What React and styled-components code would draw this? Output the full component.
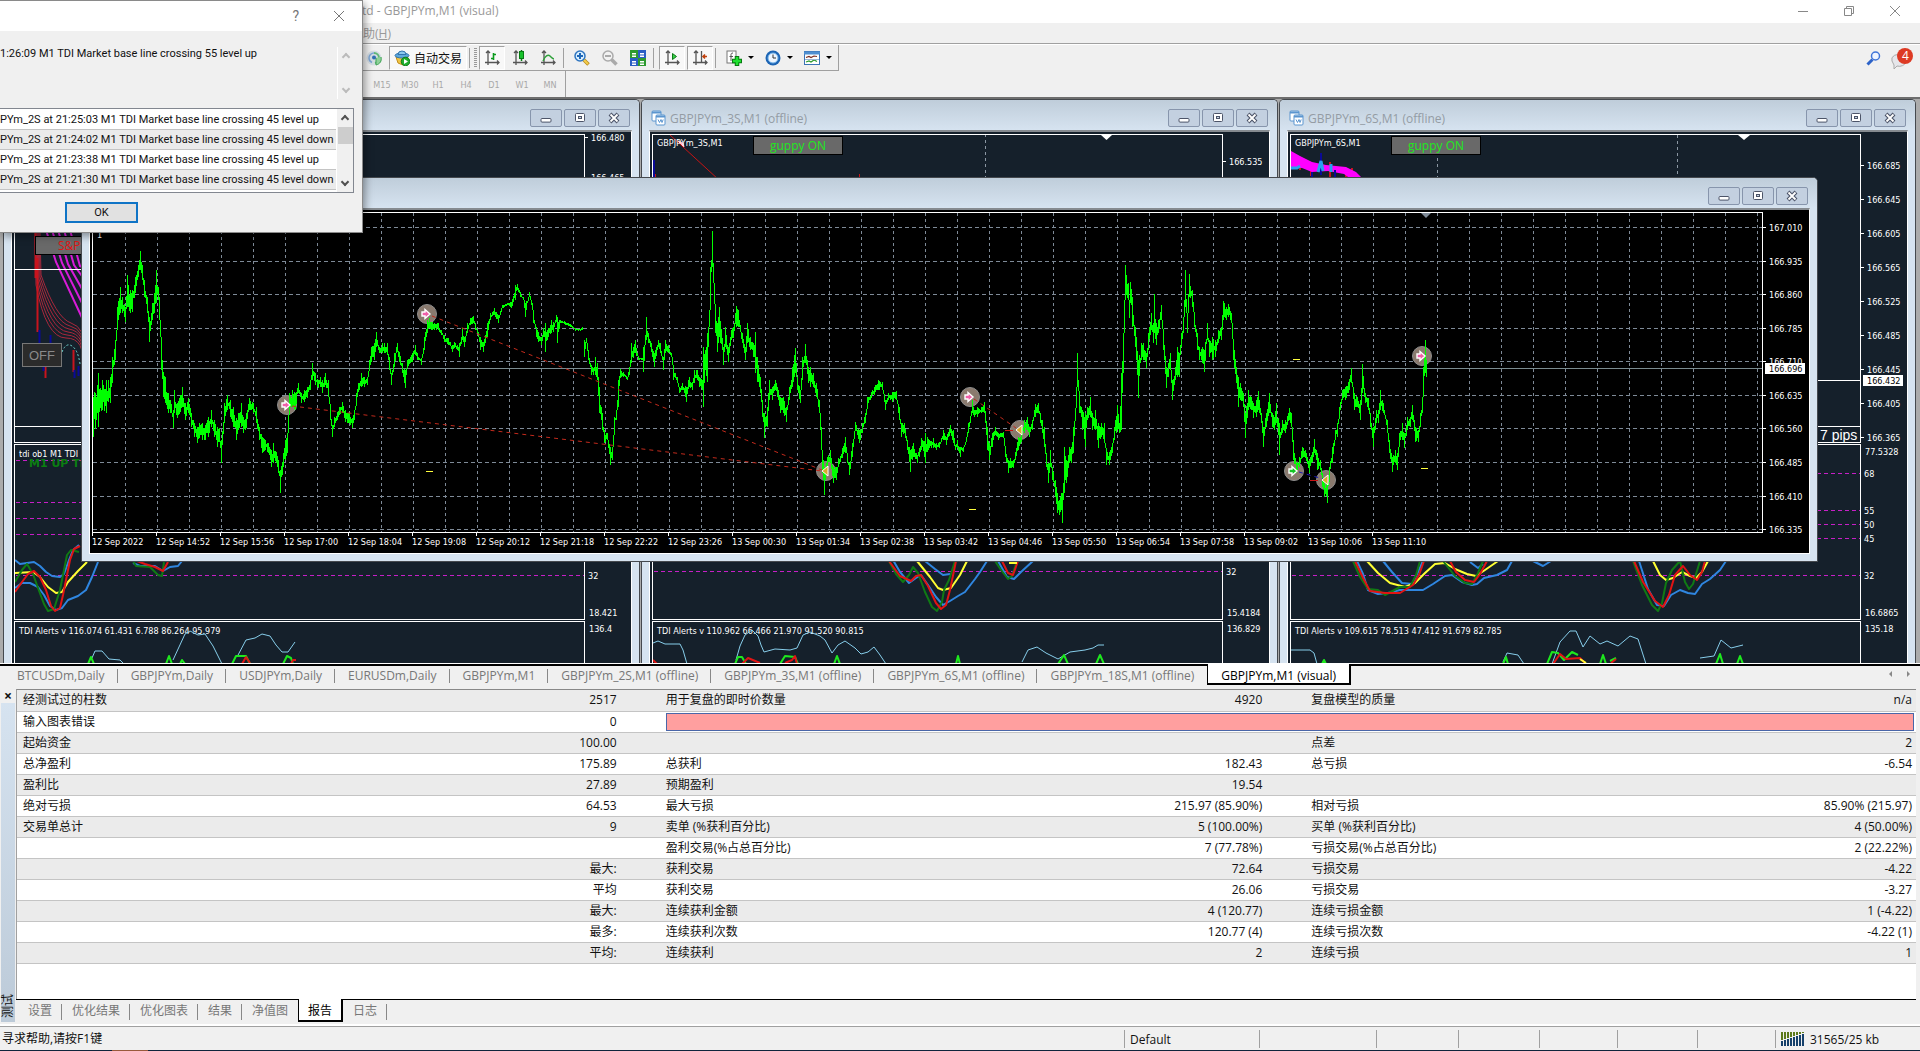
import React, { useState } from "react";
import styled, { createGlobalStyle } from "styled-components";

const UI_FONT = `"Open Sans", "Noto Sans CJK SC", sans-serif`;
const CHART_FONT = `"DejaVu Sans Condensed", "Open Sans", sans-serif`;

const NAVY = "#15202b";

/* ---------- data ---------- */

const chartTabs = [
  "BTCUSDm,Daily",
  "GBPJPYm,Daily",
  "USDJPYm,Daily",
  "EURUSDm,Daily",
  "GBPJPYm,M1",
  "GBPJPYm_2S,M1 (offline)",
  "GBPJPYm_3S,M1 (offline)",
  "GBPJPYm_6S,M1 (offline)",
  "GBPJPYm_18S,M1 (offline)",
  "GBPJPYm,M1 (visual)",
];

const testerTabs = ["设置", "优化结果", "优化图表", "结果", "净值图", "报告", "日志"];

const timeframes = ["M15", "M30", "H1", "H4", "D1", "W1", "MN"];

const alerts = [
  "PYm_2S at 21:25:03 M1 TDI Market base line crossing 45 level up",
  "PYm_2S at 21:24:02 M1 TDI Market base line crossing 45 level down",
  "PYm_2S at 21:23:38 M1 TDI Market base line crossing 45 level up",
  "PYm_2S at 21:21:30 M1 TDI Market base line crossing 45 level down",
];

const report = [
  ["经测试过的柱数", "2517", "用于复盘的即时价数量", "4920", "复盘模型的质量", "n/a"],
  ["输入图表错误", "0"],
  ["起始资金", "100.00", "", "", "点差", "2"],
  ["总净盈利", "175.89", "总获利", "182.43", "总亏损", "-6.54"],
  ["盈利比", "27.89", "预期盈利", "19.54", "", ""],
  ["绝对亏损", "64.53", "最大亏损", "215.97 (85.90%)", "相对亏损", "85.90% (215.97)"],
  ["交易单总计", "9", "卖单 (%获利百分比)", "5 (100.00%)", "买单 (%获利百分比)", "4 (50.00%)"],
  ["", "", "盈利交易(%占总百分比)", "7 (77.78%)", "亏损交易(%占总百分比)", "2 (22.22%)"],
  ["", "最大:", "获利交易", "72.64", "亏损交易", "-4.22"],
  ["", "平均", "获利交易", "26.06", "亏损交易", "-3.27"],
  ["", "最大:", "连续获利金额", "4 (120.77)", "连续亏损金额", "1 (-4.22)"],
  ["", "最多:", "连续获利次数", "120.77 (4)", "连续亏损次数", "-4.22 (1)"],
  ["", "平均:", "连续获利", "2", "连续亏损", "1"],
];

const timeLabels = [
  "12 Sep 2022", "12 Sep 14:52", "12 Sep 15:56", "12 Sep 17:00", "12 Sep 18:04",
  "12 Sep 19:08", "12 Sep 20:12", "12 Sep 21:18", "12 Sep 22:22", "12 Sep 23:26",
  "13 Sep 00:30", "13 Sep 01:34", "13 Sep 02:38", "13 Sep 03:42", "13 Sep 04:46",
  "13 Sep 05:50", "13 Sep 06:54", "13 Sep 07:58", "13 Sep 09:02", "13 Sep 10:06",
  "13 Sep 11:10",
];

// x, high, low triples, three units to a pixel
const history = [
  {
    x: 0,
    y: 180,
    bars: `280 650 770 293 580 740 305 600 690 318 600 700 330 590 670 337 530 610 345 480 540 350 380 440
    360 320 400 367 350 400 374 380 425 382 285 380 390 330 400 397 330 395 405 290 340 413 255 290
    420 212 270 427 255 300 433 300 350 440 350 400 447 410 485 455 370 420 462 340 400 467 270 370
    474 320 360 478 350 420 484 500 570 488 575 650 495 590 670 503 640 700 510 660 700 518 690 745
    523 630 700 530 670 715 540 645 695 547 620 680 555 670 720 565 655 700 573 700 740 582 730 770
    590 740 790 598 730 775 607 730 780 615 735 780 625 710 770 633 690 740 642 720 770 650 740 800
    657 745 785 664 780 850 672 670 730 680 645 690 690 660 710 698 680 740 707 715 780 715 700 750
    722 670 740 730 710 760 738 700 745 748 655 690 758 670 700 768 680 730 776 740 780 785 770 820
    795 780 810 805 790 820 812 810 860 820 790 850 828 815 850 835 840 880 841 870 940 848 820 860
    855 780 840 862 760 820 868 640 690 877 630 680 885 640 690 893 610 640 903 640 670 912 630 665
    922 620 655 930 600 630 937 548 600 945 580 615 953 600 625 960 590 620 967 600 640 975 580 615
    983 600 650 990 680 720 995 735 770 1003 710 740 1010 695 720 1017 680 705 1026 665 700 1034 690 725
    1042 700 730 1048 700 730 1055 715 745 1062 690 720 1068 640 670 1075 610 635 1083 580 620 1092 590 620
    1102 590 615 1108 540 570 1114 500 545 1122 490 540 1129 455 500 1137 500 520 1145 490 520 1152 490 520
    1160 490 525 1167 530 570 1174 580 615 1181 520 560 1190 490 515 1198 515 545 1207 550 580 1214 570 625
    1222 540 565 1230 530 550 1237 520 545 1244 495 525 1252 520 540 1264 535 555 1272 470 510 1280 420 460
    1286 415 445 1293 425 450 1303 430 450 1313 430 450 1323 450 465 1333 465 485 1343 475 495 1355 495 515
    1363 485 505 1376 490 530 1385 445 480 1393 470 500 1400 430 460 1410 415 435 1418 408 430 1425 430 450
    1433 455 470 1439 480 510`,
  },
  {
    x: 480,
    y: 200,
    bars: `0 410 440 10 425 455 20 370 410 30 340 360 42 325 345 55 345 370 65 315 325 80 310 316 92 305 325
    105 255 300 112 252 270 120 275 290 130 290 300 136 310 350 147 275 290 155 310 330 160 330 370
    168 380 410 175 395 425 182 410 435 190 385 410 196 370 455 204 385 410 214 360 400 220 365 395
    229 345 365 232 350 430 240 360 368 255 365 375 270 372 380 285 383 392 300 388 393 307 380 390`,
  },
  {
    x: 480,
    y: 200,
    bars: `311 420 470 318 415 430 325 450 480 333 495 525 340 505 525 346 470 525 352 490 540 358 560 640
    365 640 690 373 690 730 382 700 720 390 740 795 397 740 780 402 650 690 408 630 660 415 540 620
    420 508 535 430 515 530 440 530 540 446 500 525 452 430 490 460 440 475 466 420 460 473 470 480
    485 475 480 490 440 515 497 350 420 505 400 430 512 430 455 522 460 500 533 420 440 540 430 460
    549 470 510 556 420 460 565 435 460 572 460 470 580 500 540 590 530 550 598 560 580 607 550 570
    619 560 605 626 530 560 635 545 570 643 510 550 650 510 540 658 530 560 665 540 570 670 440 620
    676 450 510 682 400 545 687 330 370 689 200 300 695 92 200 700 190 250 706 320 400 712 370 455
    718 320 410 728 440 495 736 380 440 743 440 485 752 390 420 760 380 415 768 318 380 775 330 380
    785 400 430 794 440 480 801 370 430 810 410 450 818 430 470 825 395 520 832 470 545 840 530 580
    847 600 650 852 640 715 860 620 680 868 540 600 876 560 600 884 540 570 892 560 590 901 590 640
    910 590 640 919 620 665 928 560 600 936 500 560 944 445 520 952 530 570 960 570 610 967 470 540
    974 432 490 983 500 550 990 500 560 1000 520 560 1008 550 590 1016 600 640 1022 680 750 1027 760 820
    1033 800 885 1040 770 800 1050 750 790 1058 800 850 1067 800 840 1075 775 800 1085 745 775
    1094 710 760 1102 760 790 1108 790 825 1115 730 770 1125 665 690 1138 690 730 1147 670 700
    1155 640 670 1162 590 620 1172 575 595 1182 560 585 1194 540 570 1205 545 570 1214 600 630
    1225 580 600 1237 575 605 1248 572 600 1256 620 660 1264 670 710 1272 670 700 1280 720 750
    1291 750 815 1300 730 770 1310 765 790 1322 715 750 1336 700 790 1347 720 745 1358 715 745
    1368 730 750 1378 725 745 1388 690 720 1398 710 735 1410 675 700 1418 690 730 1425 735 750
    1432 720 745 1439 750 770`,
  },
  {
    x: 960,
    y: 200,
    bars: `0 740 755 10 740 755 18 710 725 25 670 700 35 600 640 43 630 650 52 620 650 62 620 640 72 607 640
    80 680 750 86 730 780 95 700 740 105 680 705 115 700 720 128 695 715 136 740 770 143 780 820
    150 775 805 158 780 805 165 755 780 173 710 750 183 690 725 192 660 700 200 650 690 208 680 710
    217 660 690 224 612 650 233 608 640 240 640 670 247 660 700 253 680 740 258 760 800 263 790 850
    269 750 800 276 800 840 284 840 890 290 880 940 298 900 945 303 880 930 307 880 970 311 740 880
    318 780 850 326 740 790 333 740 790 340 680 760 347 560 620 352 458 560 358 590 640 365 630 690
    375 640 740 382 620 660 389 590 650 396 640 690 406 630 690 415 670 745 424 670 710 433 670 730
    438 750 795 447 755 795 455 730 760 462 680 720 470 615 690 477 670 700 483 520 690 489 400 520
    492 300 400 496 195 300 503 250 300 507 300 355 511 245 310 517 290 380 524 380 440 529 410 480
    535 480 595 543 430 480 550 430 480 557 460 505 565 400 450 572 340 390 578 370 430 582 282 400
    587 370 435 595 360 400 603 315 360 610 400 450 617 500 565 625 490 530 631 460 510 637 540 600
    645 500 540 651 440 530 657 460 530 664 400 440 670 350 400 676 210 320 681 340 400 688 222 290
    695 270 320 703 340 380 710 400 450 718 440 480 725 440 490 733 450 515 740 370 420 747 420 470
    757 410 480 765 420 470 775 390 430 783 380 420 790 302 360 797 320 360 805 312 350 813 340 370
    820 420 480 828 500 550 833 530 620 840 550 600 848 580 620 856 640 715 864 570 630 872 590 630
    880 610 655 888 600 650 895 572 630 902 640 670 909 680 740 917 640 680 926 580 640 935 640 680
    942 650 690 949 610 670 957 670 765 965 660 700 975 660 700 986 625 660 993 640 680 1000 720 780
    1008 790 820 1016 770 800 1025 740 775 1035 750 775 1047 780 820 1055 755 785 1062 718 760
    1072 760 810 1080 780 810 1086 820 860 1093 850 890 1101 850 910 1108 800 840 1117 740 790
    1125 690 720 1132 670 710 1138 620 650 1145 570 600 1155 560 600 1165 545 580 1174 505 550
    1181 580 630 1190 590 620 1200 600 660 1207 492 580 1215 580 610 1223 595 630 1230 640 680
    1239 680 740 1247 630 670 1254 630 670 1261 570 630 1270 610 640 1280 660 700 1288 720 760
    1296 770 815 1304 750 790 1311 760 810 1318 700 740 1326 670 720 1333 700 745 1341 650 690
    1350 650 680 1357 615 660 1365 680 725 1373 690 725 1380 640 680 1385 590 640 1390 500 590
    1394 420 520 1399 480 530`,
  },
];

// One vertical bar per pixel column, joined to its neighbour
const buildPricePath = () => {
  let seed = 7;
  const rand = () => {
    seed = (seed * 16807) % 2147483647;
    return seed / 2147483647;
  };
  let d = "";
  history.forEach((part) => {
    const n = part.bars.trim().split(/\s+/).map(Number);
    const samples = [];
    for (let i = 0; i < n.length; i += 3) {
      samples.push([
        Math.round(part.x + n[i] / 3),
        part.y + n[i + 1] / 3,
        part.y + n[i + 2] / 3,
      ]);
    }
    let prev = null;
    const bar = (x, hi, lo) => {
      if (prev) {
        if (lo < prev[0]) lo = prev[0];
        if (hi > prev[1]) hi = prev[1];
      }
      d += `M${x}.5 ${hi.toFixed(1)}V${Math.max(lo, hi + 1).toFixed(1)}`;
      prev = [hi, lo];
    };
    samples.forEach(([x, hi, lo], i) => {
      bar(x, hi, lo);
      const next = samples[i + 1];
      if (!next) return;
      for (let k = x + 1; k < next[0]; k++) {
        const t = (k - x) / (next[0] - x);
        const h = hi + (next[1] - hi) * t;
        const l = lo + (next[2] - lo) * t;
        const span = l - h;
        bar(k, h + span * rand() * 0.4, l - span * rand() * 0.4);
      }
    });
  });
  return d;
};

const pricePath = buildPricePath();

const gridX = Array.from({ length: 52 }, (_, i) => 125 + i * 32);

const prices = [
  ["167.010", 227], ["166.935", 261], ["166.860", 294], ["166.785", 328], ["166.710", 361],
  ["166.635", 395], ["166.560", 428], ["166.485", 462], ["166.410", 496], ["166.335", 529],
];

const markers = [
  { x: 287, y: 405, kind: "sell" },
  { x: 427, y: 314, kind: "sell" },
  { x: 826, y: 471, kind: "close" },
  { x: 970, y: 397, kind: "sell" },
  { x: 1020, y: 430, kind: "close" },
  { x: 1294, y: 471, kind: "buy" },
  { x: 1326, y: 480, kind: "close" },
  { x: 1422, y: 356, kind: "sell" },
];

const BLUE = "#2f86e0";
const YELLOW = "#ffff33";
const GREEN = "#0f7a14";
const RED = "#e01414";
const SKY = "#87ceeb";
const LIME = "#1ee81e";

const offlineWindows = [
  {
    x: 14,
    title: "",
    axis: [["166.480", 137], ["166.465", 177]],
    panes: [
      { label: "" },
      { label: "tdi ob1 M1 TDI", levels: [460, 502, 518, 534, 575], axis: [["32", 575], ["18.421", 612]] },
      { label: "TDI Alerts v 116.074 61.431 6.788 86.264 95.979", axis: [["136.4", 628]] },
    ],
    lines: [
      [BLUE, "15,560 20,564 27,563 34,562 40,566 46,572 52,576 60,577 64,574 69,560 73,550 79,545"],
      [BLUE, "15,588 22,583 30,583 38,587 44,595 50,606 56,610 62,608 68,600 78,596 86,590 92,577 98,562"],
      [YELLOW, "15,573 33,572 40,577 48,587 56,593 62,592 68,582 78,571 87,562"],
      [GREEN, "15,582 22,570 27,564 33,574 38,588 44,604 48,611 54,609 60,590 64,570 67,555 71,550 79,552"],
      [RED, "15,592 22,582 28,574 34,571 40,577 46,590 51,606 55,611 60,608 63,595 66,580 70,560 74,549 80,546"],
      [BLUE, "133,563 140,566 155,566 163,571 170,567 178,566 182,561"],
      [GREEN, "133,561 136,566 150,567 158,575 162,576 164,562"],
      [RED, "137,561 145,564 155,567 163,571 168,562"],
    ],
    alerts: [
      [SKY, "92,658 95,651 102,651 109,659 120,660 124,664"],
      [SKY, "173,660 185,634 190,631 198,635 205,634 213,646 222,664"],
      [SKY, "237,657 246,640 255,638 262,634 270,636 276,645 282,652 288,652 295,642"],
      [LIME, "88,664 91,657 94,664"],
      [LIME, "166,664 169,656 172,664"],
      [LIME, "180,664 182,660 185,664"],
      [LIME, "232,664 236,656 246,656 250,664"],
      [LIME, "283,664 287,656 291,658 293,664"],
      [RED, "242,664 246,657 250,663"],
      [RED, "291,664 293,660 296,660"],
    ],
  },
  {
    x: 652,
    title: "GBPJPYm_3S,M1 (offline)",
    axis: [["166.535", 161]],
    panes: [
      { label: "GBPJPYm_3S,M1" },
      { label: "", levels: [571], axis: [["32", 571], ["15.4184", 612]] },
      { label: "TDI Alerts v 110.962 66.466 21.970 91.520 90.815", axis: [["136.829", 628]] },
    ],
    lines: [
      [BLUE, "893,560 900,572 909,583 916,578 921,575 928,585 936,597 943,605 950,601 958,596 965,592 975,579 980,572 987,561"],
      [BLUE, "925,561 935,569 943,575 950,574"],
      [YELLOW, "917,561 930,577 938,588 943,590 951,588 960,575 967,561"],
      [GREEN, "889,561 896,574 903,582 909,575 913,567 918,573 925,592 932,607 937,611 942,602 944,590 949,580 955,561"],
      [RED, "889,561 900,576 911,581 916,576 921,575 928,586 936,603 941,609 946,605 950,590 956,561"],
      [BLUE, "998,561 1007,577 1014,579 1021,572 1033,561"],
      [GREEN, "995,561 1001,570 1008,579 1012,576 1017,561"],
      [RED, "1002,561 1008,573 1013,575 1018,561"],
      [YELLOW, "1009,563 1017,563"],
    ],
    alerts: [
      [SKY, "653,643 658,641 665,644 680,644 683,650 687,664"],
      [SKY, "736,660 740,646 745,635 752,630 758,636 761,645 764,652 775,649 790,650 797,648 803,635 810,632 820,636 825,640 832,653 838,645 845,641 855,648 861,654 868,652 874,647 880,655 886,664"],
      [SKY, "1022,662 1028,650 1037,647 1046,653 1058,659 1070,652 1085,650 1093,648 1098,645 1104,645"],
      [LIME, "735,664 738,657 742,657 746,664"],
      [LIME, "780,664 785,656 795,657 798,664"],
      [LIME, "834,664 837,656 840,664"],
      [LIME, "956,664 958,656 960,664"],
      [LIME, "1058,664 1064,655 1068,664"],
      [LIME, "1096,664 1100,655 1104,664"],
      [RED, "742,664 748,658 760,663"],
      [RED, "785,663 792,660 795,656 797,664"],
      [RED, "653,660 657,664"],
    ],
  },
  {
    x: 1290,
    title: "GBPJPYm_6S,M1 (offline)",
    axis: [
      ["166.685", 165], ["166.645", 199], ["166.605", 233], ["166.565", 267], ["166.525", 301],
      ["166.485", 335], ["166.445", 369], ["166.405", 403], ["166.365", 437],
    ],
    panes: [
      { label: "GBPJPYm_6S,M1" },
      {
        label: "",
        levels: [473, 510, 524, 538, 575],
        axis: [["77.5328", 451], ["68", 473], ["55", 510], ["50", 524], ["45", 538], ["32", 575], ["16.6865", 612]],
      },
      { label: "TDI Alerts v 109.615 78.513 47.412 91.679 82.785", axis: [["135.18", 628]] },
    ],
    lines: [
      [BLUE, "1383,561 1392,572 1402,583 1412,584 1418,572 1423,561"],
      [BLUE, "1357,561 1363,574 1368,590 1378,594 1388,593 1400,590 1423,590 1433,584 1445,576 1452,575 1462,582 1472,585 1477,584 1484,578 1497,575 1507,570 1512,561"],
      [BLUE, "1470,562 1478,568 1483,564"],
      [BLUE, "1533,561 1543,566 1551,561"],
      [YELLOW, "1367,561 1378,573 1390,583 1405,587 1415,583 1425,573 1435,564 1445,563 1455,569 1467,574 1476,576 1485,570 1498,561"],
      [GREEN, "1353,561 1360,577 1368,589 1378,590 1385,595 1400,587 1410,587 1416,575 1420,561"],
      [GREEN, "1443,561 1455,576 1465,583 1472,584 1478,573 1483,561"],
      [RED, "1355,561 1363,578 1370,591 1385,593 1400,593 1413,585 1419,575 1424,561"],
      [RED, "1450,561 1456,572 1465,580 1474,582 1480,574 1487,561"],
      [BLUE, "1639,561 1648,589 1657,605 1664,606 1671,595 1680,590 1688,593 1695,594 1702,584 1710,579 1720,570 1726,561"],
      [YELLOW, "1653,561 1660,575 1666,580 1673,578 1682,572 1690,576 1696,578 1702,572 1708,561"],
      [GREEN, "1633,561 1642,585 1652,605 1658,611 1662,603 1666,583 1672,570 1680,561 1685,582 1689,589 1693,584 1700,561"],
      [RED, "1634,561 1643,582 1655,601 1663,607 1669,595 1675,575 1683,566 1690,575 1697,580 1702,572 1705,561"],
    ],
    alerts: [
      [SKY, "1291,650 1310,650 1314,653 1317,664"],
      [SKY, "1503,662 1507,653 1518,655 1524,664"],
      [SKY, "1552,664 1560,642 1570,631 1576,631 1583,647 1590,636 1600,644 1607,641 1618,646 1630,636 1638,639 1646,664"],
      [SKY, "1700,658 1714,656 1721,640 1731,648 1743,645"],
      [LIME, "1322,664 1324,660 1326,664"],
      [LIME, "1503,664 1506,657 1508,664"],
      [LIME, "1547,664 1552,652 1558,653 1564,660 1572,652 1578,655"],
      [LIME, "1600,664 1603,655 1606,664"],
      [LIME, "1610,661 1616,658"],
      [LIME, "1716,664 1720,654 1723,664"],
      [LIME, "1737,664 1740,656 1743,664"],
      [RED, "1553,664 1560,654 1566,659 1580,658 1585,663"],
      [RED, "1611,663 1616,659"],
      [YELLOW, "1580,659 1586,663"],
    ],
  },
];

/* ---------- small drawings ---------- */

const WinGlyph = ({ type }) => (
  <svg width="14" height="12" viewBox="0 0 14 12">
    {type === "min" && <rect x="2" y="6.5" width="10" height="3.6" rx="1" fill="#fff" stroke="#4c5468" />}
    {type === "max" && (
      <>
        <rect x="2.5" y="1.5" width="9" height="8" rx="1" fill="#fff" stroke="#4c5468" />
        <rect x="5.5" y="4.5" width="3" height="2" fill="#c8d4e4" stroke="#4c5468" />
      </>
    )}
    {type === "close" && (
      <>
        <path d="M3 2l8 8M11 2l-8 8" stroke="#4c5468" strokeWidth="4" />
        <path d="M3.500 2.500l7 7M10.500 2.500l-7 7" stroke="#fff" strokeWidth="1.800" />
      </>
    )}
  </svg>
);

const ChartIcon = () => (
  <svg width="15" height="16" viewBox="0 0 15 16">
    <rect x="1" y="1" width="9" height="10" rx="1" fill="#fff" stroke="#5b95cf" />
    <path d="M1 2.500h9" stroke="#5b95cf" strokeWidth="2" />
    <rect x="5" y="5" width="9" height="10" rx="1" fill="#fff" stroke="#5b95cf" />
    <path d="M5 6.500h9" stroke="#5b95cf" strokeWidth="2" />
    <path d="M7 9.500l1.500 3 1.500-3 1 3 1.200-3" fill="none" stroke="#5b95cf" />
  </svg>
);

const Axes = () => (
  <path d="M4 1v14M1 12.500h14M2 3l2-2 2 2M13 10.500l2 2-2 2" fill="none" stroke="#555" strokeWidth="1.300" />
);

const icons = {
  signal: (
    <>
      <circle cx="8" cy="8" r="7.500" fill="#d5dde3" />
      <path d="M8 3a5 5 0 0 1 5 5 5 5 0 0 1-4 5" fill="none" stroke="#5fb877" strokeWidth="2" />
      <path d="M8 3a5 5 0 0 0-5 5 5 5 0 0 0 3 4.500" fill="none" stroke="#7da7d6" strokeWidth="1.500" />
      <path d="M8 8h2v7c4-1 6-4 5-8" fill="#8fd09a" stroke="#3ea354" />
      <circle cx="8" cy="7.500" r="2" fill="#2f6fb5" />
    </>
  ),
  robot: (
    <>
      <path d="M2 7l2 6 5 2 4-3 1-6z" fill="#f0c545" stroke="#c28d1c" />
      <ellipse cx="8" cy="5.500" rx="7" ry="2.500" fill="#5ea9dd" stroke="#3174ad" />
      <path d="M4 4.500a4 3.500 0 0 1 8 0z" fill="#8cc8ee" stroke="#3174ad" />
      <circle cx="11.500" cy="11.500" r="4.300" fill="#1fae2d" stroke="#0c7a17" />
      <path d="M10 9v5l4-2.500z" fill="#fff" />
    </>
  ),
  bars: (
    <>
      <Axes />
      <path d="M9.500 3v7M9.500 4.500h2.500M7 8.500h2.500" fill="none" stroke="#0a9a1c" strokeWidth="1.600" />
    </>
  ),
  candles: (
    <>
      <Axes />
      <path d="M9.500 0v11" stroke="#087b14" strokeWidth="1.500" />
      <rect x="7.500" y="1.500" width="4" height="7" fill="#18c22c" stroke="#087b14" />
    </>
  ),
  line: (
    <>
      <Axes />
      <path d="M3 11c2-5 5-7 7-5s3 3 4 3" fill="none" stroke="#2ea13a" strokeWidth="1.400" />
    </>
  ),
  zoomIn: (
    <>
      <path d="M9.500 9.500l5 5" stroke="#b98b1d" strokeWidth="3.500" />
      <path d="M9.500 9.500l4.500 4.500" stroke="#f3cd4c" strokeWidth="2" />
      <circle cx="6" cy="6" r="5" fill="#d9efff" stroke="#2f75c0" strokeWidth="1.500" />
      <path d="M3 6h6M6 3v6" stroke="#1f68b8" strokeWidth="2" />
    </>
  ),
  zoomOut: (
    <>
      <path d="M9.500 9.500l5 5" stroke="#aaa" strokeWidth="3.500" />
      <circle cx="6" cy="6" r="5" fill="#f2f2f2" stroke="#aaa" strokeWidth="1.500" />
      <path d="M3 6h6" stroke="#aaa" strokeWidth="2" />
    </>
  ),
  tile: (
    <>
      <rect x="0" y="0" width="8" height="8" fill="#2d9a2f" />
      <rect x="8" y="0" width="8" height="8" fill="#2b5fc4" />
      <rect x="0" y="8" width="8" height="8" fill="#2b5fc4" />
      <rect x="8" y="8" width="8" height="8" fill="#2d9a2f" />
      <path d="M2 3h4v1.500H2zM2 5.500h4v1.500H2zM10 3h4v1.500h-4zM10 5.500h4v1.500h-4zM2 11h4v1.500H2zM2 13.500h4v1.500H2zM10 11h4v1.500h-4zM10 13.500h4v1.500h-4z" fill="#fff" />
    </>
  ),
  scroll: (
    <>
      <Axes />
      <path d="M8.500 3.500v6l4-3z" fill="#39d04a" stroke="#0c7a17" />
    </>
  ),
  shift: (
    <>
      <Axes />
      <path d="M9.500 1v11" stroke="#555" strokeWidth="1.300" />
      <path d="M15 6.500h-4M13 4.500l-2 2 2 2" fill="none" stroke="#c0410d" strokeWidth="1.600" />
    </>
  ),
  newChart: (
    <>
      <rect x="1" y="1" width="9" height="12" fill="#fff" stroke="#777" />
      <path d="M7 3c-2 0-2 1-2 2v6M3.500 6.500H7" fill="none" stroke="#555" />
      <path d="M11 6v10M6 11h10" stroke="#067a10" strokeWidth="4.500" />
      <path d="M11 7v8M7 11h8" stroke="#1fe02f" strokeWidth="2.500" />
    </>
  ),
  clock: (
    <>
      <circle cx="8" cy="8" r="7.500" fill="#1c64b4" />
      <circle cx="8" cy="8" r="5" fill="#eef6ff" stroke="#74b3ea" />
      <path d="M8 4.500V8h3" fill="none" stroke="#333" />
    </>
  ),
  template: (
    <>
      <rect x=".500" y="1.500" width="15" height="13" fill="#fff" stroke="#3a73b5" />
      <path d="M0 3h16" stroke="#4f8fd0" strokeWidth="3" />
      <path d="M2 7.500l3-1 2 1 3-1.500 3 .500" fill="none" stroke="#7a2a1c" strokeWidth="1.200" />
      <path d="M2 12l3-1 2 1 3-2 3 1.500" fill="none" stroke="#2d9a2f" strokeWidth="1.200" />
      <path d="M1 9.500h14" stroke="#9ab6d6" />
    </>
  ),
};

const ToolIcon = ({ name }) => (
  <svg width="16" height="16" viewBox="0 0 16 16">
    {icons[name]}
  </svg>
);

const MarkerSign = ({ x, y, kind }) => (
  <g transform={`translate(${x} ${y})`}>
    {kind === "close" ? (
      <path d="M-4 0L2 -5V5z" fill="#d9a92e" stroke="#fff" />
    ) : (
      <path
        d="M-5 -2H-2V-4.500L3 0L-2 4.500V2H-5z"
        fill={kind === "buy" ? "#13c522" : "#f05fa8"}
        stroke="#fff"
        strokeWidth="1.400"
      />
    )}
  </g>
);

/* ---------- chart windows ---------- */

const WindowButtons = () => (
  <ButtonSet>
    <CaptionButton aria-label="Minimize"><WinGlyph type="min" /></CaptionButton>
    <CaptionButton aria-label="Maximize"><WinGlyph type="max" /></CaptionButton>
    <CaptionButton aria-label="Close"><WinGlyph type="close" /></CaptionButton>
  </ButtonSet>
);

const PriceAxis = ({ top, height, labels = [], ticks, children }) => (
  <AxisSvg width="46" height={height} viewBox={`0 ${top} 46 ${height}`}>
    {labels.map(([text, y]) => (
      <g key={text}>
        {ticks && <path d={`M0 ${y}.5h3`} stroke="#fff" />}
        <text x={ticks ? 6 : text.length < 4 ? 3 : 4} y={y + 4}>{text}</text>
      </g>
    ))}
    {children}
  </AxisSvg>
);

const Lines = ({ data, width }) =>
  data.map(([color, points], i) => (
    <polyline
      key={i}
      points={points}
      fill="none"
      stroke={color}
      strokeWidth={color === SKY ? 1 : width}
      strokeLinejoin="round"
    />
  ));

const GuppyScene = ({ index }) => {
  if (index === 0) {
    return (
      <>
        {[0, 1, 2, 3, 4].map((i) => (
          <path key={i} d={`M${46 + i * 6} 230L${56 + i * 6} ${262 + i}L${84 + i} ${322 - i * 13}`} fill="none" stroke="#d81bd8" strokeWidth="2" />
        ))}
        {[0, 1, 2, 3, 4, 5].map((i) => (
          <path key={i} d={`M${35 + i} 232L${36 + i} ${285 - i * 2}Q${46 + i * 2} ${338 - i * 4} ${66 + i} ${338 - i * 3}T82 ${368 - i * 4}`} fill="none" stroke="#a8283c" />
        ))}
        <path d="M35.500 232v46M45.500 366v12M37.500 258v74M73.500 350v22" stroke="#c8141e" strokeWidth="2" />
        <path d="M39.500 330v30M43.500 366v5M50.500 335v15M74.500 370v8M78.500 366v10" stroke="#0a0a96" strokeWidth="2" />
        <path d="M62 352q4-10 10-6t8 18" fill="none" stroke="#6fd6d0" strokeDasharray="2 2" />
        <path d="M15 269.500h570M15 426.500h570" stroke="#fff" />
      </>
    );
  }
  if (index === 1) {
    return (
      <>
        <path d="M985.500 134v60" stroke="#8b97a3" strokeDasharray="3 3" />
        <path d="M670 135l49 45" stroke="#c81414" />
        <path d="M678 141l6 6-1-4z" fill="#ffc0cb" stroke="#ffc0cb" />
        <path d="M654 160v18" stroke="#0a0a96" strokeWidth="2" />
        <path d="M655.500 174v6M859.500 174v6" stroke="#c81414" />
        <path d="M1101 135h11l-5.500 5z" fill="#fff" />
      </>
    );
  }
  return (
    <>
      <path d="M1437.500 158v30M1677.500 135v50" stroke="#8b97a3" strokeDasharray="3 3" />
      <path d="M1300 162v8M1311 164v12M1330 162v18M1346 168v10M1352 168v12" stroke="#c8141e" strokeWidth="2" />
      <path d="M1291 151l9 5 12 6 14 3 20 2 10 5 8 8h-12l-8-6-16-3-16 1-10-4-11-1z" fill="#ff00ff" />
      <path d="M1312 172v6M1321 153v22M1335 170v10" stroke="#0a0a96" strokeWidth="2" />
      <path d="M1291 168h6l3-2M1318 172l3-11 2 10M1331 164v8" fill="none" stroke="#2aa0f0" strokeWidth="3" />
      <path d="M1291 380.500h570M1291 426.500h570" stroke="#fff" />
      <text x="1820" y="440" fontSize="14" fontFamily="Liberation Sans, sans-serif">7 pips</text>
      <path d="M1738 135h12l-6 5z" fill="#fff" />
    </>
  );
};

const OfflineWindow = ({ win, index }) => (
  <ChildWindow>
    <TitleBar>
      <ChartIcon />
      <WindowTitle>{win.title}</WindowTitle>
      <WindowButtons />
    </TitleBar>
    <ChartBody>
      <PaneRow $height={309}>
        <Plot>
          <PlotSvg width="571" height="309" viewBox={`${win.x + 1} 135 571 309`}>
            <GuppyScene index={index} />
          </PlotSvg>
          {index === 0 ? (
            <SideButtons>
              <SymbolButton $color="#e01414">S&amp;P ON</SymbolButton>
              <OffButton>OFF</OffButton>
            </SideButtons>
          ) : (
            <PlotHeader>
              <PlotName>{win.panes[0].label}</PlotName>
              <SymbolButton $color={LIME}>guppy ON</SymbolButton>
            </PlotHeader>
          )}
        </Plot>
        <PriceAxis top={134} height={309} labels={win.axis} ticks>
          {index === 2 && (
            <>
              <rect x="2" y="375" width="40" height="11" fill="#fff" />
              <text x="6" y="384" fill="#000">166.432</text>
            </>
          )}
        </PriceAxis>
      </PaneRow>
      <PaneRow $height={176}>
        <Plot>
          <PlotSvg width="571" height="174" viewBox={`${win.x + 1} 445 571 174`}>
            {win.panes[1].levels.map((y) => (
              <path key={y} d={`M${win.x + 2} ${y}.5h568`} stroke="#c71fc7" strokeDasharray="4 3" />
            ))}
            <text x={win.x + 5} y="457">{win.panes[1].label}</text>
            {index === 0 && (
              <text x="29" y="467" fill="#0b7d12" fontSize="11" fontWeight="bold" fontFamily="DejaVu Sans, sans-serif">
                M1 UP TREND
              </text>
            )}
            <Lines data={win.lines} width={2} />
          </PlotSvg>
        </Plot>
        <PriceAxis top={444} height={176} labels={win.panes[1].axis} />
      </PaneRow>
      <PaneRow $height={176}>
        <Plot>
          <PlotSvg width="571" height="174" viewBox={`${win.x + 1} 622 571 174`}>
            <text x={win.x + 5} y="634">{win.panes[2].label}</text>
            <Lines data={win.alerts} width={2} />
          </PlotSvg>
        </Plot>
        <PriceAxis top={621} height={176} labels={win.panes[2].axis} />
      </PaneRow>
    </ChartBody>
  </ChildWindow>
);

const VisualWindow = () => (
  <FloatingWindow>
    <TitleBar>
      <WindowTitle />
      <WindowButtons />
    </TitleBar>
    <ChartBody $black>
      <PaneRow $height={321}>
        <Plot>
          <PlotSvg width="1670" height="319" viewBox="93 213 1670 319">
            <g stroke="#7e8a97" strokeDasharray="3 3">
              {gridX.map((x) => <path key={x} d={`M${x}.5 213v319`} />)}
              {prices.map(([p, y]) => <path key={p} d={`M93 ${y}.5h1669`} strokeDasharray="4 3" />)}
            </g>
            <path d="M93 368.500h1669" stroke="#7a8b90" />
            <text x="97" y="238">1</text>
            {markers.map((m) => (
              <circle key={m.x} cx={m.x} cy={m.y} r="9.500" fill="#8a7a6e" stroke="#8d8d8d" />
            ))}
            <path d={pricePath} stroke="#00ff00" shapeRendering="crispEdges" />
            <g stroke="#c22a1c" strokeDasharray="4 4" fill="none">
              <path d="M292 406L822 471M432 316L822 470M974 399L1016 428" />
              <path d="M1299 472l24 7" stroke="#1c1cb8" />
            </g>
            <path d="M1005 430.500h8M1310 480.500h8" stroke="#c81414" />
            {markers.map((m) => <MarkerSign key={m.x} {...m} />)}
            <path d="M426 471.500h7M969 509.500h7M1293 359.500h7M1421 468.500h7" stroke="#ffff3c" />
            <path d="M1421 213h10l-5 5z" fill="#7e8a97" />
          </PlotSvg>
        </Plot>
        <PriceAxis top={212} height={321} labels={prices} ticks>
          <rect x="2" y="363" width="40" height="11" fill="#fff" />
          <text x="6" y="372" fill="#000">166.696</text>
        </PriceAxis>
      </PaneRow>
      <TimeAxis>
        {timeLabels.map((t) => <TimeLabel key={t}>{t}</TimeLabel>)}
      </TimeAxis>
    </ChartBody>
  </FloatingWindow>
);

/* ---------- panels ---------- */

const AlertDialog = () => (
  <DialogBox role="dialog" aria-label="Alert">
    <DialogTitle>
      <DialogIcon aria-label="Help">?</DialogIcon>
      <DialogIcon aria-label="Close">
        <svg width="12" height="12" viewBox="0 0 12 12"><path d="M1 1l10 10M11 1L1 11" stroke="#777" /></svg>
      </DialogIcon>
    </DialogTitle>
    <DialogMessage>
      <span>1:26:09 M1 TDI Market base line crossing 55 level up</span>
      <ScrollTrack $plain>
        <Arrow /><Arrow $down />
      </ScrollTrack>
    </DialogMessage>
    <AlertList>
      <AlertRows>
        {alerts.map((a) => <li key={a}>{a}</li>)}
      </AlertRows>
      <ScrollTrack>
        <Arrow $dark /><Thumb /><Arrow $dark $down />
      </ScrollTrack>
    </AlertList>
    <OkButton>OK</OkButton>
  </DialogBox>
);

const ReportTable = () => (
  <Report>
    <colgroup>
      <col style={{ width: "17%" }} /><col style={{ width: "17%" }} />
      <col style={{ width: "17%" }} /><col style={{ width: "17%" }} />
      <col style={{ width: "16%" }} /><col />
    </colgroup>
    <tbody>
      {report.map((row, i) => (
        <tr key={i}>
          {row.map((cell, j) => <td key={j}>{cell}</td>)}
          {row.length === 2 && (
            <BarCell colSpan="4"><ModelBar /></BarCell>
          )}
        </tr>
      ))}
    </tbody>
  </Report>
);

const App = () => {
  const [chartTab, setChartTab] = useState(chartTabs.length - 1);
  const [testerTab, setTesterTab] = useState(5);

  return (
    <Page>
      <GlobalStyle />
      <AppTitle>
        <AppName>td - GBPJPYm,M1 (visual)</AppName>
        <AppButtons>
          <button aria-label="Minimize">
            <svg width="12" height="12"><path d="M1 6.500h10" stroke="#888" /></svg>
          </button>
          <button aria-label="Restore">
            <svg width="12" height="12"><path d="M1.500 3.500h7v7h-7zM3.500 3.500v-2h7v7h-2" fill="none" stroke="#888" /></svg>
          </button>
          <button aria-label="Close">
            <svg width="12" height="12"><path d="M1 1l10 10M11 1L1 11" stroke="#888" /></svg>
          </button>
        </AppButtons>
      </AppTitle>
      <MenuBar>
        <MenuItem>帮助(<u>H</u>)</MenuItem>
      </MenuBar>

      <ToolRow>
        <Tools>
          <Tool aria-label="Signals"><ToolIcon name="signal" /></Tool>
          <AutoTrading><ToolIcon name="robot" />自动交易</AutoTrading>
          <Grip />
          <Tool $on aria-label="Bar chart"><ToolIcon name="bars" /></Tool>
          <Tool aria-label="Candlesticks"><ToolIcon name="candles" /></Tool>
          <Tool aria-label="Line chart"><ToolIcon name="line" /></Tool>
          <Divider />
          <Tool aria-label="Zoom in"><ToolIcon name="zoomIn" /></Tool>
          <Tool aria-label="Zoom out"><ToolIcon name="zoomOut" /></Tool>
          <Tool aria-label="Tile windows"><ToolIcon name="tile" /></Tool>
          <Divider />
          <Tool $on aria-label="Auto scroll"><ToolIcon name="scroll" /></Tool>
          <Tool $on aria-label="Chart shift"><ToolIcon name="shift" /></Tool>
          <Divider />
          <Tool $menu aria-label="Indicators"><ToolIcon name="newChart" /><Caret /></Tool>
          <Tool $menu aria-label="Periods"><ToolIcon name="clock" /><Caret /></Tool>
          <Tool $menu aria-label="Templates"><ToolIcon name="template" /><Caret /></Tool>
        </Tools>
        <Notices>
          <svg width="15" height="15" viewBox="0 0 15 15">
            <path d="M1.500 13.500l5-5" stroke="#2c62c8" strokeWidth="3" />
            <circle cx="9.500" cy="5" r="4" fill="#eef4ff" stroke="#3f74d8" strokeWidth="1.500" />
          </svg>
          <svg width="24" height="22" viewBox="0 0 24 22">
            <path d="M2 14a6 5 0 0 1 10-5l4 6a7 6 0 0 1-9 4l-3 3v-4z" fill="#e6e6ea" stroke="#aaa" />
            <circle cx="15" cy="9" r="8" fill="#dd3a24" />
            <text x="12" y="13" fontSize="12" fill="#fff" fontFamily="Open Sans">4</text>
          </svg>
        </Notices>
      </ToolRow>
      <Periods>
        {timeframes.map((t) => <Period key={t}>{t}</Period>)}
      </Periods>

      <Desktop>
        {offlineWindows.map((w, i) => <OfflineWindow key={w.x} win={w} index={i} />)}
        <VisualWindow />
      </Desktop>

      <ChartTabs>
        {chartTabs.map((t, i) => (
          <ChartTab
            key={t}
            $active={i === chartTab}
            $last={i + 1 === chartTab}
            onClick={() => setChartTab(i)}
          >
            {t}
          </ChartTab>
        ))}
        <TabArrows>
          <Triangle $left /><Triangle />
        </TabArrows>
      </ChartTabs>

      <Tester>
        <TesterSide>
          <CloseX aria-label="Close tester">×</CloseX>
          <SideCaption>测试</SideCaption>
        </TesterSide>
        <TesterMain>
          <ReportArea><ReportTable /></ReportArea>
          <TesterTabs>
            {testerTabs.map((t, i) => (
              <TesterTab
                key={t}
                $active={i === testerTab}
                $last={i + 1 === testerTab}
                onClick={() => setTesterTab(i)}
              >
                {t}
              </TesterTab>
            ))}
          </TesterTabs>
        </TesterMain>
      </Tester>

      <StatusBar>
        <StatusHint>寻求帮助,请按F1键</StatusHint>
        <StatusCell $width={135}>Default</StatusCell>
        <StatusCell $width={117} />
        <StatusCell $width={82} />
        <StatusCell $width={81} />
        <StatusCell $width={78} />
        <StatusCell $width={80} />
        <StatusCell $width={78} />
        <StatusCell $width={145}>
          <svg width="24" height="14" viewBox="0 0 24 14">
            {[0, 1, 2, 3, 4, 5, 6, 7].map((i) => (
              <g key={i}>
                <rect x={i * 3} y="0" width="2" height={8 - i} fill="#5d7a1c" />
                <rect x={i * 3} y={9 - i} width="2" height={5 + i} fill="#15406b" />
              </g>
            ))}
          </svg>
          31565/25 kb
        </StatusCell>
      </StatusBar>
      <DesktopEdge><i /></DesktopEdge>

      <AlertDialog />
    </Page>
  );
};

export default App;

/* ---------- styles ---------- */

const GlobalStyle = createGlobalStyle`
  * { box-sizing: border-box; }
  body {
    margin: 0;
    background: #f0f0f0;
    color: #111;
    font-family: ${UI_FONT};
    font-size: 12px;
    overflow: hidden;
  }
  button {
    margin: 0;
    padding: 0;
    border: 0;
    background: none;
    font: inherit;
    color: inherit;
  }
  svg { display: block; flex: none; }
`;

const Page = styled.div`
  position: relative;
  display: flex;
  flex-direction: column;
  min-height: 100vh;
  overflow: hidden;
`;

const AppTitle = styled.header`
  display: flex;
  justify-content: space-between;
  height: 23px;
  background: #fff;
`;

const AppName = styled.span`
  padding-left: 362px;
  line-height: 22px;
  color: #999;
`;

const AppButtons = styled.div`
  display: flex;
  gap: 34px;
  height: 21px;
  padding: 0 19px;
  align-items: center;
`;

const MenuBar = styled.nav`
  display: flex;
  height: 21px;
  padding-left: 351px;
  border-bottom: 1px solid #a0a0a0;
`;

const MenuItem = styled.button`
  height: 19px;
  color: #999;
`;

const ToolRow = styled.div`
  display: flex;
  justify-content: space-between;
  height: 27px;
  border-top: 1px solid #fff;
`;

const Tools = styled.div`
  display: flex;
  align-items: center;
  gap: 2px;
  padding-left: 361px;
  padding-right: 2px;
  border-right: 1px solid #a0a0a0;
  border-bottom: 1px solid #a0a0a0;
`;

const Tool = styled.button`
  display: flex;
  align-items: center;
  justify-content: center;
  gap: 6px;
  width: ${(p) => (p.$menu ? 37 : 26)}px;
  height: 24px;
  border: 1px solid;
  border-color: ${(p) => (p.$on ? "#a0a0a0 #fff #fff #a0a0a0" : "transparent")};
  background: ${(p) => (p.$on ? "#f8f8f8" : "none")};
`;

const AutoTrading = styled.button`
  display: flex;
  align-items: center;
  gap: 4px;
  width: 78px;
  height: 24px;
  padding-left: 4px;
  border: 1px solid;
  border-color: #a0a0a0 #fff #fff #a0a0a0;
  background: #f8f8f8;
`;

const Grip = styled.i`
  width: 8px;
  height: 20px;
  border-left: 1px solid #a0a0a0;
  background: repeating-linear-gradient(#999 0 1px, transparent 1px 2px) right / 3px 100% no-repeat;
`;

const Divider = styled.i`
  width: 4px;
  height: 20px;
  border-left: 1px solid #a0a0a0;
`;

const Caret = styled.i`
  border: 3px solid transparent;
  border-top-color: #000;
  border-bottom: 0;
`;

const Notices = styled.div`
  display: flex;
  align-items: center;
  gap: 9px;
  padding-right: 6px;
`;

const Periods = styled.div`
  display: flex;
  width: 566px;
  height: 26px;
  padding-top: 2px;
  padding-left: 368px;
  border-right: 1px solid #a0a0a0;
`;

const Period = styled.button`
  width: 28px;
  font-family: ${CHART_FONT};
  font-size: 9px;
  color: #a8a8a8;
`;

const Desktop = styled.main`
  position: relative;
  display: grid;
  grid-template-columns: repeat(3, minmax(0, 1fr));
  gap: 1px;
  height: 567px;
  padding: 0 4px 0 3px;
  border-top: 2px solid #6e6e6e;
  border-bottom: 1px solid #fff;
  background: #ababab;
  overflow: hidden;
`;

const ChildWindow = styled.section`
  border: 1px solid #45494e;
  border-bottom: 0;
  border-radius: 5px 5px 0 0;
  background: #d6e3f0;
  padding: 0 7px 7px;
  overflow: hidden;
`;

const FloatingWindow = styled(ChildWindow)`
  position: absolute;
  top: 78px;
  left: 81px;
  right: 102px;
  border-bottom: 1px solid #45494e;
`;

const TitleBar = styled.div`
  display: flex;
  align-items: center;
  gap: 4px;
  height: 30px;
  margin: 0 -7px;
  padding: 6px 9px 0;
  background: linear-gradient(#bfcdda, #d6e3f0);
`;

const WindowTitle = styled.span`
  flex: 1;
  color: #949ca4;
`;

const ButtonSet = styled.div`
  display: flex;
  gap: 2px;
`;

const CaptionButton = styled.button`
  display: flex;
  align-items: center;
  justify-content: center;
  width: 32px;
  height: 18px;
  border: 1px solid #8795ac;
  border-radius: 2px;
  background: #c3d0e0;
`;

const ChartBody = styled.div`
  border: 1px solid #fff;
  border-top: 2px solid #868b90;
  padding: 2px 0 0 2px;
  background: ${(p) => (p.$black ? "#000" : NAVY)};
`;

const PaneRow = styled.div`
  display: flex;
  height: ${(p) => p.$height}px;
  margin-bottom: ${(p) => (p.$height === 321 ? 0 : 1)}px;
`;

const Plot = styled.div`
  position: relative;
  flex: 1;
  min-width: 0;
  border: 1px solid #fff;
  overflow: hidden;
`;

const PlotSvg = styled.svg`
  font-family: ${CHART_FONT};
  font-size: 9px;
  fill: #fff;
`;

const AxisSvg = styled(PlotSvg)`
  overflow: visible;
`;

const PlotHeader = styled.div`
  position: absolute;
  top: 1px;
  left: 4px;
  display: flex;
  align-items: flex-start;
`;

const PlotName = styled.span`
  width: 96px;
  padding-top: 2px;
  font-family: ${CHART_FONT};
  font-size: 9px;
  color: #fff;
`;

const SymbolButton = styled.button`
  width: 90px;
  height: 19px;
  border: 1px solid #000;
  background: #696969;
  color: ${(p) => p.$color};
  line-height: 16px;
`;

const SideButtons = styled.div`
  position: absolute;
  top: 101px;
  left: 20px;
`;

const OffButton = styled.button`
  display: block;
  width: 40px;
  height: 24px;
  margin: 88px 0 0 -13px;
  border: 1px solid #777;
  background: #2b2b2b;
  color: #8a8a8a;
  font-family: "Liberation Sans", sans-serif;
  font-size: 13px;
`;

const TimeAxis = styled.div`
  display: flex;
  height: 20px;
  overflow: hidden;
`;

const TimeLabel = styled.span`
  flex: none;
  width: 64px;
  font-family: ${CHART_FONT};
  font-size: 9px;
  line-height: 18px;
  color: #fff;
  background: linear-gradient(#fff, #fff) 0 0 / 1px 3px no-repeat;
`;

const ChartTabs = styled.nav`
  display: flex;
  height: 25px;
  padding-left: 4px;
  border-top: 2px solid #000;
`;

const ChartTab = styled.button`
  height: ${(p) => (p.$active ? 21 : 19)}px;
  margin-top: ${(p) => (p.$active ? -2 : 0)}px;
  padding: ${(p) => (p.$active ? "3px 13px 0" : "0 13px")};
  color: ${(p) => (p.$active ? "#000" : "#777")};
  background: ${(p) => {
    if (p.$active) return "#fff";
    return p.$last ? "none" : "linear-gradient(#888, #888) right 3px / 1px 14px no-repeat";
  }};
  border: solid #000;
  border-width: ${(p) => (p.$active ? "0 2px 2px 1px" : "0")};
`;

const TabArrows = styled.div`
  display: flex;
  align-items: center;
  gap: 15px;
  height: 16px;
  margin-left: auto;
  padding-right: 10px;
`;

const Triangle = styled.i`
  border: solid transparent;
  border-width: ${(p) => (p.$left ? "3px 3px 3px 0" : "3px 0 3px 3px")};
  border-${(p) => (p.$left ? "right" : "left")}-color: #888;
`;

const Tester = styled.section`
  display: flex;
  flex: 1;
  border-bottom: 2px solid #fff;
`;

const TesterSide = styled.aside`
  display: flex;
  flex-direction: column;
  width: 16px;
`;

const CloseX = styled.button`
  height: 14px;
  font-size: 14px;
  font-weight: 700;
  line-height: 12px;
`;

const SideCaption = styled.span`
  flex: 1;
  width: 14px;
  margin-left: 1px;
  margin-bottom: 2px;
  padding-top: 4px;
  writing-mode: vertical-rl;
  text-orientation: sideways;
  transform: rotate(180deg);
  line-height: 14px;
  background: linear-gradient(#bccad8, #d6e3f0);
`;

const TesterMain = styled.div`
  display: flex;
  flex: 1;
  flex-direction: column;
  margin-right: 4px;
`;

const ReportArea = styled.div`
  flex: 1;
  border-top: 1px solid #888;
  border-left: 1px solid #a0a0a0;
  background: #fff;
`;

const Report = styled.table`
  width: 100%;
  table-layout: fixed;
  border-collapse: collapse;

  tr:nth-child(odd) { background: #ebebeb; }
  td {
    height: 21px;
    padding: 0 0 0 6px;
    border-bottom: 1px solid #c4c4c4;
    line-height: 20px;
    white-space: nowrap;
  }
  td:nth-child(3), td:nth-child(5) { padding-left: 3px; }
  td:nth-child(even) { padding-right: 46px; text-align: right; }
  td:nth-child(6) { padding-right: 4px; }
`;

const BarCell = styled.td`
  && { padding: 0 2px 0 1px; }
`;

const ModelBar = styled.div`
  height: 18px;
  border: 1px solid #4a66a8;
  background: #ff9f9f;
`;

const TesterTabs = styled.nav`
  display: flex;
  height: 25px;
  padding-left: 2px;
  border-top: 1px solid #000;
`;

const TesterTab = styled.button`
  height: ${(p) => (p.$active ? 23 : 20)}px;
  margin-top: ${(p) => (p.$active ? -1 : 0)}px;
  padding: ${(p) => (p.$active ? "0 9px" : "0 10px")};
  color: ${(p) => (p.$active ? "#000" : "#777")};
  background: ${(p) => {
    if (p.$active) return "#fff";
    return p.$last ? "none" : "linear-gradient(#888, #888) right 4px / 1px 16px no-repeat";
  }};
  border: solid #000;
  border-width: ${(p) => (p.$active ? "0 2px 2px 1px" : "0")};
`;

const StatusBar = styled.footer`
  display: flex;
  height: 24px;
  border-top: 1px solid #a0a0a0;
`;

const StatusHint = styled.span`
  flex: 1;
  padding-left: 2px;
  line-height: 24px;
`;

const StatusCell = styled.span`
  display: flex;
  align-items: center;
  gap: 5px;
  width: ${(p) => p.$width}px;
  margin: 3px 0 2px;
  padding-left: 5px;
  border-left: 1px solid #a0a0a0;
`;

const DesktopEdge = styled.div`
  height: 1px;
  padding-left: 112px;
  background: #10243c;

  i {
    display: block;
    width: 36px;
    height: 1px;
    background: #9a5a3c;
  }
`;

const DialogBox = styled.div`
  position: absolute;
  top: 0;
  left: 0;
  width: 363px;
  height: 233px;
  background: #f0f0f0;
  border: solid #8a8a8a;
  border-width: 1px 1px 1px 0;
  box-shadow: 2px 3px 8px rgba(0, 0, 0, 0.4);
  font-family: Roboto, "Open Sans", sans-serif;
  font-size: 11px;
`;

const DialogTitle = styled.div`
  display: flex;
  justify-content: flex-end;
  gap: 34px;
  height: 30px;
  padding-right: 17px;
  background: #fff;
`;

const DialogIcon = styled.button`
  display: flex;
  align-items: center;
  color: #777;
  font-size: 14px;
`;

const DialogMessage = styled.div`
  display: flex;
  justify-content: space-between;
  height: 52px;
  margin: 16px 8px 9px 0;
  line-height: 14px;
`;

const ScrollTrack = styled.div`
  display: flex;
  flex: none;
  flex-direction: column;
  align-items: center;
  width: 17px;
  padding: 5px 0;
  background: #f0f0f0;
  border-left: 1px solid #fff;
  justify-content: ${(p) => (p.$plain ? "space-between" : "flex-start")};

  > :last-child { margin-top: auto; }
`;

const Arrow = styled.i`
  width: 6px;
  height: 6px;
  margin: 2px 0;
  border: solid ${(p) => (p.$dark ? "#505050" : "#bbb")};
  border-width: 2px 0 0 2px;
  transform: rotate(${(p) => (p.$down ? 225 : 45)}deg);
`;

const Thumb = styled.i`
  width: 15px;
  height: 17px;
  margin-top: 3px;
  background: #cdcdcd;
`;

const AlertList = styled.div`
  display: flex;
  height: 85px;
  margin-right: 8px;
  border: solid #828790;
  border-width: 1px 1px 1px 0;
  background: #fff;
`;

const AlertRows = styled.ul`
  flex: 1;
  margin: 1px 0 0;
  padding: 0;
  list-style: none;
  overflow: hidden;

  li {
    height: 20px;
    border-bottom: 1px solid #c4c4c4;
    line-height: 20px;
    white-space: nowrap;
  }
  li:nth-child(even) { background: #ebebeb; }
`;

const OkButton = styled.button`
  width: 73px;
  height: 21px;
  margin: 9px 0 0 65px;
  border: 2px solid #0f74c6;
  background: #e1e1e1;
`;
